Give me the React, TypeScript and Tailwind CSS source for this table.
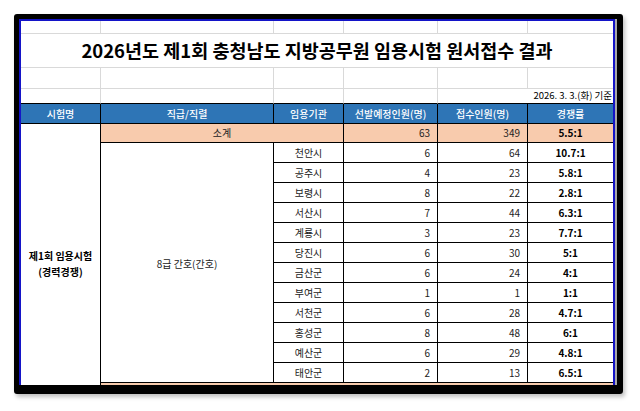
const rows: [string, number, number, string][] = [
  ['천안시', 6, 64, '10.7:1'],
  ['공주시', 4, 23, '5.8:1'],
  ['보령시', 8, 22, '2.8:1'],
  ['서산시', 7, 44, '6.3:1'],
  ['계룡시', 3, 23, '7.7:1'],
  ['당진시', 6, 30, '5:1'],
  ['금산군', 6, 24, '4:1'],
  ['부여군', 1, 1, '1:1'],
  ['서천군', 6, 28, '4.7:1'],
  ['홍성군', 8, 48, '6:1'],
  ['예산군', 6, 29, '4.8:1'],
  ['태안군', 2, 13, '6.5:1'],
];

const headers = ['시험명', '직급/직렬', '임용기관', '선발예정인원(명)', '접수인원(명)', '경쟁률'];

export default function App() {
  const font = { fontFamily: '"Noto Sans CJK KR", "Noto Sans", sans-serif' };

  return (
    <div className="min-h-[411px] bg-white pl-[14px] pt-[14px]" style={font}>
      {/* torn-edge frame */}
      <div className="w-[609px] rounded-[3px] border-t-[5px] border-r-[6px] border-b-[9px] border-l-[5px] border-black shadow-[2px_3px_4px_rgba(0,0,0,0.25)]">
        <div className="border-r-2 border-[#a8a8a8]">
          <div className="grid grid-cols-[80px_173px_70px_94px_90px_85px] grid-rows-[13px_34px_21px_15px_20px_19px_repeat(12,20px)_2px] border-t-2 border-r-2 border-l-2 border-[#1414c8] bg-white text-[10px] leading-none text-[#222]">
            {/* blank sheet rows */}
            {[0, 1, 2, 3, 4, 5].map((i) => (
              <div key={`a${i}`} className={`border-b border-[#d9d9d9] ${i < 5 ? 'border-r' : ''}`} />
            ))}
            <div className="col-span-6 flex items-center justify-center border-b border-[#d9d9d9] text-[18.5px] font-bold text-black">
              2026년도 제1회 충청남도 지방공무원 임용시험 원서접수 결과
            </div>
            {[0, 1, 2, 3, 4, 5].map((i) => (
              <div key={`b${i}`} className={`border-b border-[#d9d9d9] ${i < 5 ? 'border-r' : ''}`} />
            ))}
            <div className="border-r border-b border-r-[#d9d9d9] border-b-black" />
            <div className="border-r border-b border-r-[#d9d9d9] border-b-black" />
            <div className="border-r border-b border-r-[#d9d9d9] border-b-black" />
            <div className="border-r border-b border-r-[#d9d9d9] border-b-black" />
            <div className="col-span-2 flex items-center justify-end border-b border-black pr-[1px] text-[9.5px] text-black">
              2026. 3. 3.(화) 기준
            </div>

            {/* header */}
            {headers.map((h, i) => (
              <div
                key={h}
                className={`flex items-center justify-center border-b border-black bg-[#2e75b6] font-medium text-white ${i < 5 ? 'border-r' : ''}`}
              >
                {h}
              </div>
            ))}

            {/* exam name, merged */}
            <div className="row-span-14 flex flex-col items-center justify-center gap-[6px] border-r border-black pt-[18px] font-bold text-black">
              <span>제1회 임용시험</span>
              <span>(경력경쟁)</span>
            </div>

            {/* subtotal */}
            <div className="col-span-2 flex items-center justify-center border-r border-b border-black bg-[#f8cbad]">소계</div>
            <div className="flex items-center justify-end border-r border-b border-black bg-[#f8cbad] pr-[7px]">63</div>
            <div className="flex items-center justify-end border-r border-b border-black bg-[#f8cbad] pr-[7px]">349</div>
            <div className="flex items-center justify-center border-b border-black bg-[#f8cbad] font-bold text-black">5.5:1</div>

            <div className="row-span-12 flex items-center justify-center border-r border-b border-black pt-[2px]">8급 간호(간호)</div>

            {rows.map(([place, planned, applied, ratio]) => (
              <div key={place} className="contents">
                <div className="flex items-center justify-center border-r border-b border-black">{place}</div>
                <div className="flex items-center justify-end border-r border-b border-black pr-[7px]">{planned}</div>
                <div className="flex items-center justify-end border-r border-b border-black pr-[7px]">{applied}</div>
                <div className="flex items-center justify-center border-b border-black font-bold text-black">{ratio}</div>
              </div>
            ))}

            {/* next subtotal row peeking in */}
            <div className="col-span-5 bg-[#f8cbad]" />
          </div>
        </div>
      </div>
    </div>
  );
}
